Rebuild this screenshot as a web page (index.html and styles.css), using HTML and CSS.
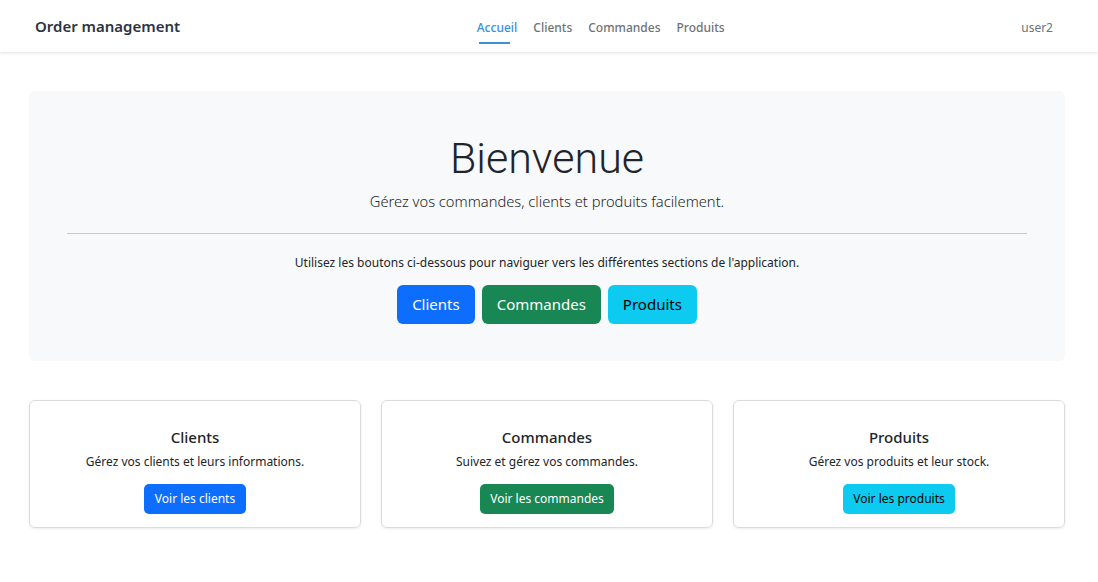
FILE: index.html
```html
<!DOCTYPE html>
<html lang="fr">
<head>
<meta charset="utf-8">
<title>Order management</title>
<link rel="stylesheet" href="styles.css">
</head>
<body>
<nav class="navbar">
  <div class="brand">Order management</div>
  <ul class="nav-links">
    <li><a class="nav-link active" href="#">Accueil</a></li>
    <li><a class="nav-link" href="#">Clients</a></li>
    <li><a class="nav-link" href="#">Commandes</a></li>
    <li><a class="nav-link" href="#">Produits</a></li>
  </ul>
  <div class="user">user2</div>
</nav>
<main class="container">
  <section class="jumbotron">
    <h1 class="display">Bienvenue</h1>
    <p class="lead">Gérez vos commandes, clients et produits facilement.</p>
    <hr class="divider">
    <p class="intro">Utilisez les boutons ci-dessous pour naviguer vers les différentes sections de l'application.</p>
    <div class="btn-row">
      <a class="btn btn-lg btn-primary" href="#">Clients</a>
      <a class="btn btn-lg btn-success" href="#">Commandes</a>
      <a class="btn btn-lg btn-info" href="#">Produits</a>
    </div>
  </section>
  <section class="cards">
    <div class="card">
      <h5 class="card-title">Clients</h5>
      <p class="card-text">Gérez vos clients et leurs informations.</p>
      <a class="btn btn-sm btn-primary" href="#">Voir les clients</a>
    </div>
    <div class="card">
      <h5 class="card-title">Commandes</h5>
      <p class="card-text">Suivez et gérez vos commandes.</p>
      <a class="btn btn-sm btn-success" href="#">Voir les commandes</a>
    </div>
    <div class="card">
      <h5 class="card-title">Produits</h5>
      <p class="card-text">Gérez vos produits et leur stock.</p>
      <a class="btn btn-sm btn-info" href="#">Voir les produits</a>
    </div>
  </section>
</main>
</body>
</html>
```

FILE: styles.css
```css
* { box-sizing: border-box; }
body {
  margin: 0;
  font-family: "Noto Sans", "Open Sans", sans-serif;
  color: #212529;
  background: #fff;
  font-size: 13px;
}
.navbar {
  height: 52px;
  display: flex;
  align-items: center;
  padding: 0 45px 0 35px;
  background: #fff;
  box-shadow: 0 1px 3px rgba(0,0,0,0.12);
  position: relative;
}
.brand {
  font-size: 15px;
  font-weight: 600;
  color: #2b3440;
}
.nav-links {
  list-style: none;
  margin: 0 auto;
  padding: 0 0 8px;
  height: 52px;
  display: flex;
  align-items: flex-end;
  gap: 16px;
}
.nav-link {
  display: block;
  position: relative;
  text-decoration: none;
  color: #6b737b;
  font-size: 12px;
  font-weight: 500;
  line-height: 18px;
  padding: 0 0 7px;
}
.nav-link.active {
  color: #3d8fd6;
}
.nav-link.active::after {
  content: "";
  position: absolute;
  left: 2px;
  width: 78%;
  bottom: 0;
  height: 2px;
  background: #3d8fd6;
}
.user {
  color: #6b737b;
  font-size: 12px;
  padding-top: 3px;
}
.container {
  padding: 39px 33px 40px 29px;
}
.jumbotron {
  background: #f8f9fa;
  border-radius: 6px;
  padding: 41px 38px 37px;
  text-align: center;
}
.display {
  margin: 0 0 6.5px;
  font-family: "Roboto", "Noto Sans", sans-serif;
  font-size: 43px;
  font-weight: 300;
  line-height: 52px;
}
.lead {
  margin: 0;
  font-size: 14.7px;
  font-weight: 300;
  line-height: 20px;
}
.divider {
  margin: 22.7px 0 20.3px;
  border: 0;
  border-top: 1px solid #c8cacc;
}
.intro {
  margin: 0 0 12.7px;
  font-size: 12px;
  line-height: 18px;
}
.btn-row {
  display: flex;
  justify-content: center;
  gap: 7px;
}
.btn {
  display: inline-block;
  text-decoration: none;
  border-radius: 5px;
  color: #fff;
}
.btn-lg {
  font-size: 15px;
  height: 39px;
  line-height: 39px;
  padding: 0 15px;
  border-radius: 6px;
}
.btn-sm {
  font-size: 12px;
  height: 30.5px;
  line-height: 30.5px;
  padding: 0 10.5px;
}
.btn-primary { background: #0d6efd; }
.btn-success { background: #198754; }
.btn-info { background: #0dcaf0; color: #000; }
.cards {
  margin-top: 39px;
  display: grid;
  grid-template-columns: repeat(3, 1fr);
  gap: 20px;
}
.card {
  border: 1px solid #d9dcdf;
  border-radius: 6px;
  box-shadow: 0 1px 3px rgba(0,0,0,0.08);
  text-align: center;
  padding: 26px 16px 13px;
  height: 127.5px;
}
.card-title {
  margin: 0;
  font-size: 15px;
  font-weight: 500;
  line-height: 20px;
}
.card-text {
  margin: 6.3px 0 13.5px;
  font-size: 12px;
  line-height: 17px;
}
```
